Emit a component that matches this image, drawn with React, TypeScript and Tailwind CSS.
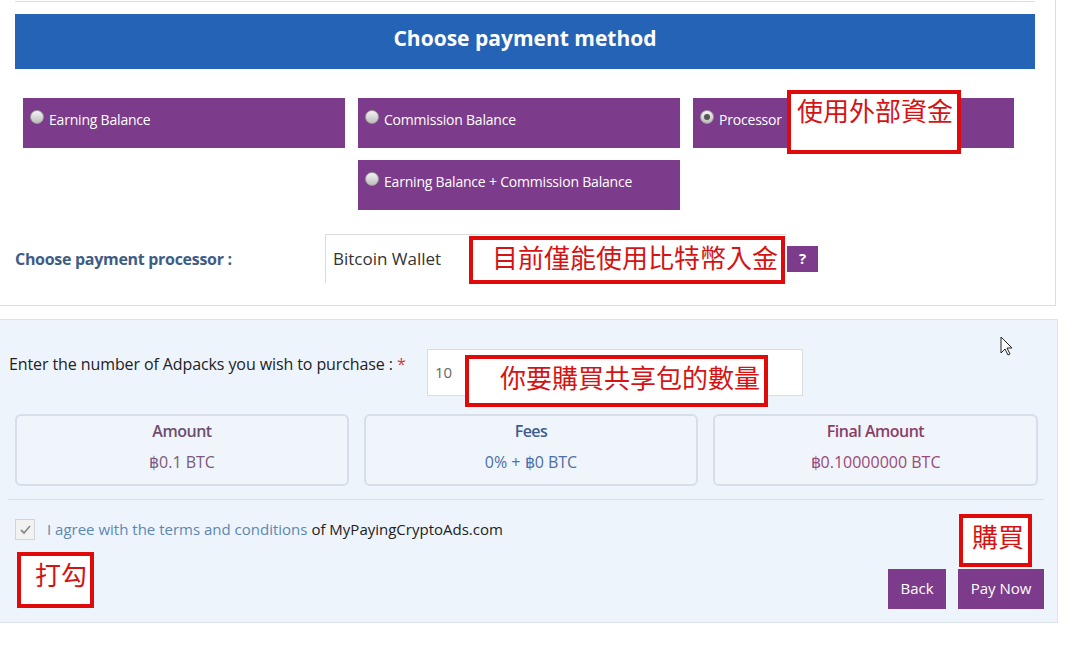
import React from 'react'

const purple = 'bg-[#7c3b8b]'

const Radio = ({ checked = false }: { checked?: boolean }) => (
  <span className="mt-[1px] w-[14px] h-[14px] rounded-full bg-gradient-to-b from-[#f4f4f4] to-[#bdbdbd] border border-[#9a9a9a] flex items-center justify-center shrink-0">
    {checked && <span className="w-[6px] h-[6px] rounded-full bg-[#555]" />}
  </span>
)

const MethodButton = ({ label, checked = false }: { label: string; checked?: boolean }) => (
  <div className={`${purple} h-[50px] flex items-start gap-[5px] pl-[7px] pt-[11px] text-white text-[14px] leading-[18px]`}>
    <Radio checked={checked} />
    <span className="mt-[2px] tracking-[-0.2px]">{label}</span>
  </div>
)

const Note = ({ text, className }: { text: string; className: string }) => (
  <div
    className={`absolute bg-white border-[4px] border-[#e10a0a] text-[#d41414] text-[26px] leading-none font-['Noto_Sans_CJK_TC','Noto_Sans_CJK_SC',serif] ${className}`}
  >
    {text}
  </div>
)

const SummaryCard = ({
  title,
  value,
  width,
  titleColor,
  valueColor,
}: {
  title: string
  value: string
  width: string
  titleColor: string
  valueColor: string
}) => (
  <div className={`${width} h-[72px] rounded-[6px] border-2 border-[#d6dee9] bg-[#f0f5fc] flex flex-col items-center pt-[3px]`}>
    <div className={`text-[16px] font-semibold tracking-[-0.5px] ${titleColor}`}>{title}</div>
    <div className={`mt-[7px] text-[16px] ${valueColor}`}>{value}</div>
  </div>
)

export default function App() {
  return (
    <div className="relative w-[1079px] h-[646px] overflow-hidden bg-white font-['Open_Sans','Noto_Sans',sans-serif]">
      {/* payment method panel */}
      <section className="w-[1056px] border-r border-b border-[#dedede] pl-[15px] pr-[20px] pt-[1px] pb-[22px]">
        <div className="h-px bg-[#dcdfe4]" />
        <div className="mt-[12px] h-[55px] bg-[#2563b6] flex items-center justify-center pb-[5px] text-white text-[21px] font-bold">
          Choose payment method
        </div>

        <div className="mt-[29px] ml-[8px] grid grid-cols-[322px_322px_321px] gap-x-[13px] gap-y-[12px]">
          <MethodButton label="Earning Balance" />
          <MethodButton label="Commission Balance" />
          <MethodButton label="Processor" checked />
          <div />
          <MethodButton label="Earning Balance + Commission Balance" />
        </div>

        <div className="mt-[24px] flex items-center">
          <div className="w-[310px] text-[16px] font-bold text-[#3e5c86] tracking-[-0.3px]">Choose payment processor :</div>
          <div className="w-[461px] h-[49px] border-t border-l border-[#dcdcdc] pl-[7px] flex items-center text-[17px] text-[#333]">
            Bitcoin Wallet
          </div>
          <div className={`ml-px w-[31px] h-[26px] ${purple} text-white text-[15px] font-bold flex items-center justify-center`}>?</div>
        </div>
      </section>

      {/* purchase panel */}
      <section className="mt-[13px] w-[1058px] bg-[#eef4fc] border-t border-r border-b border-[#dbe3ee] pl-[8px] pr-[13px] pt-[29px] pb-[13px]">
        <div className="flex items-start ml-px">
          <div className="w-[418px] mt-[3px] text-[16px] font-medium text-[#222] tracking-[-0.1px]">
            Enter the number of Adpacks you wish to purchase : <span className="text-[#d9363e]">*</span>
          </div>
          <div className="w-[376px] h-[47px] bg-white border border-[#dcdcdc] pl-[7px] flex items-center text-[15px] text-[#666]">10</div>
        </div>

        <div className="mt-[18px] ml-[7px] flex gap-[15px]">
          <SummaryCard title="Amount" value="฿0.1 BTC" width="w-[334px]" titleColor="text-[#6d4f6c]" valueColor="text-[#7b5a7e]" />
          <SummaryCard title="Fees" value="0% + ฿0 BTC" width="w-[334px]" titleColor="text-[#3e5e8e]" valueColor="text-[#4b6fa6]" />
          <SummaryCard title="Final Amount" value="฿0.10000000 BTC" width="w-[325px]" titleColor="text-[#8a3f69]" valueColor="text-[#9a4a78]" />
        </div>

        <div className="mt-[13px] h-px bg-[#d6dee9]" />

        <div className="mt-[18px] ml-[7px] flex items-center gap-[12px]">
          <div className="w-[20px] h-[21px] bg-[#f2f2f2] border border-[#d4d4d4] flex items-center justify-center">
            <svg width="11" height="9" viewBox="0 0 11 9" fill="none">
              <path d="M1 5l3 3 6-7" stroke="#8a8a8a" strokeWidth="1.8" />
            </svg>
          </div>
          <div className="text-[15px]">
            <span className="text-[#5b88b3]">I agree with the terms and conditions</span>
            <span className="text-[#222]"> of MyPayingCryptoAds.com</span>
          </div>
        </div>

        <div className="mt-[28px] flex justify-end gap-[12px]">
          <button className={`w-[58px] h-[40px] ${purple} text-white text-[15px]`}>Back</button>
          <button className={`w-[86px] h-[40px] ${purple} text-white text-[15px]`}>Pay Now</button>
        </div>
      </section>

      {/* annotations */}
      <Note text="使用外部資金" className="left-[787px] top-[90px] w-[174px] h-[64px] pl-[6px] pt-[3px]" />
      <Note text="目前僅能使用比特幣入金" className="left-[469px] top-[236px] w-[316px] h-[48px] pl-[19px] pt-[4px]" />
      <Note text="你要購買共享包的數量" className="left-[465px] top-[355px] w-[303px] h-[52px] pl-[31px] pt-[5px]" />
      <Note text="打勾" className="left-[17px] top-[552px] w-[77px] h-[56px] pl-[14px] pt-[5px]" />
      <Note text="購買" className="left-[959px] top-[514px] w-[73px] h-[53px] pl-[9px] pt-[5px]" />

      {/* mouse pointer */}
      <svg className="absolute left-[1000px] top-[336px]" width="14" height="21" viewBox="0 0 14 21">
        <path d="M1 1v16l4-4 3 6 2-1-3-6h5z" fill="white" stroke="#222" strokeWidth="1" strokeLinejoin="round" />
      </svg>
    </div>
  )
}
